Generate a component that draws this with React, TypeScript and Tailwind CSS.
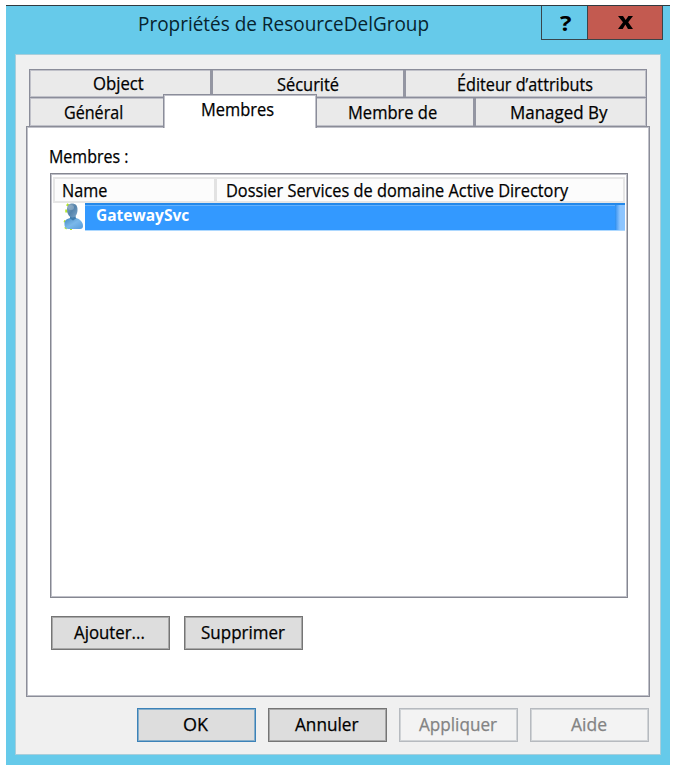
import { useLayoutEffect, useRef, useState } from "react";
import clsx from "clsx";

// A single line of text, condensed or stretched to an exact width.
function Fit({ text, width, className }: { text: string; width: number; className?: string }) {
  const ref = useRef<HTMLSpanElement>(null);
  const [scale, setScale] = useState(1);
  useLayoutEffect(() => {
    if (ref.current) setScale(width / ref.current.offsetWidth);
  }, [width, text]);
  return (
    <div className={clsx("h-5 shrink-0 whitespace-nowrap leading-5", className)} style={{ width }}>
      <span ref={ref} className="inline-block origin-left" style={{ transform: `scaleX(${scale})` }}>
        {text}
      </span>
    </div>
  );
}

function Button({ text, width, kind = "normal" }: { text: string; width: number; kind?: "normal" | "default" | "disabled" }) {
  return (
    <button
      disabled={kind === "disabled"}
      className={clsx(
        "flex h-[34px] w-[119px] shrink-0 justify-center border pr-[2px] pt-[5px]",
        kind === "normal" && "border-[#757575] bg-[#dddddd] shadow-[inset_0_0_0_1px_#a8a8a8]",
        kind === "default" && "border-[#3c82b8] bg-[#dddddd] shadow-[inset_0_0_0_1px_#86aeca]",
        kind === "disabled" && "border-[#b6babf] bg-[#f3f3f3] text-[#838383] shadow-[inset_0_0_0_1px_#d0d3d6]",
      )}
    >
      <Fit text={text} width={width} />
    </button>
  );
}

function UserIcon() {
  return (
    <svg width="22" height="27" viewBox="0 0 22 27" className="block">
      <defs>
        <linearGradient id="head" x1="0" y1="0" x2="1" y2="1">
          <stop offset="0" stopColor="#8eabc0" />
          <stop offset=".5" stopColor="#5583ab" />
          <stop offset="1" stopColor="#7da6ca" />
        </linearGradient>
        <linearGradient id="body" x1="0" y1="0" x2="1" y2="1">
          <stop offset="0" stopColor="#4589c2" />
          <stop offset=".5" stopColor="#7ab8ea" />
          <stop offset="1" stopColor="#569bdb" />
        </linearGradient>
      </defs>
      <path d="M6.500 1 5 3M4.500 6.500v3M3.500 17.500l-.8 2M3 24l2 1.500M8 26h2" fill="none" stroke="#b2e52a" strokeWidth="2.500" />
      <path d="M2.500 22C2 18 4 16 8 15h6c4 1 7 4 7 8 0 2-1 3-3 3H7c-3 0-4-1-4.500-4Z" fill="url(#body)" />
      <path d="M8 13h5.500l.5 2.500-3 2-3-2Z" fill="#3f7cad" />
      <path d="M5 6.500C5 2.500 7 .5 10 .5c3.500 0 5.500 2 5.500 6 0 4.500-2 8-5 8S5 11 5 6.500Z" fill="url(#head)" />
      <ellipse cx="9" cy="4.500" rx="3" ry="2.500" fill="#a3bccf" opacity=".5" />
    </svg>
  );
}

export default function App() {
  return (
    <div className="h-[769px] w-[674px] bg-white pl-[6px] pt-[5px] font-['Open_Sans','Noto_Sans',sans-serif] text-[18px] text-black">
      <div className="flex h-[760px] w-[664px] flex-col bg-[#66caea]">
        <header className="flex h-[49px] justify-between border-t border-[#303a40] pr-[7px]">
          <Fit text="Propriétés de ResourceDelGroup" width={291} className="ml-[132px] mt-[8px] text-[20px] text-[#07242f]" />
          <div className="flex h-[34px] border-x border-b border-[#38454b]">
            <button className="flex w-[46px] justify-center border-r border-[#38454b] pl-px pt-[6px] text-[22px] font-bold">
              <Fit text="?" width={12} />
            </button>
            <button className="flex w-[74px] items-center justify-center bg-[#c35a50]">
              <svg width="15" height="13" viewBox="0 0 15 13">
                <path d="M0 0h5l2.700 4L10.400 0H15l-4.800 6.200L15 13h-5L7.400 8.500 4.700 13H0l5-6.800Z" fill="#000" />
              </svg>
            </button>
          </div>
        </header>

        <main className="ml-[9px] h-[701px] w-[646px] border border-[#a8cedb] bg-[#f0f0f0] pl-[10px] pt-[14px] [-webkit-text-stroke:0.250px]">
          <div className="ml-[3px] flex h-[28px] w-[618px] border border-b-0 border-[#8b8d9a] bg-[#eaeaea] pl-px pt-px shadow-[inset_0_0_0_1px_#c0c1c9]">
            <div className="-mt-px w-[182px] border-r-[3px] border-[#9496a2] pl-[62px] pt-[3px]"><Fit text="Object" width={51} /></div>
            <div className="-mt-px w-[193px] border-r-[3px] border-[#9496a2] pl-[64px] pt-[4px]"><Fit text="Sécurité" width={62} /></div>
            <div className="pl-[51px] pt-[3px]"><Fit text="Éditeur d’attributs" width={136} /></div>
          </div>
          <div className="ml-[3px] flex h-[29px] w-[618px] border border-b-0 border-[#8b8d9a] bg-[#eaeaea] pl-px pt-px shadow-[inset_0_0_0_1px_#c0c1c9]">
            <div className="w-[132px] pl-[33px] pt-[3px]"><Fit text="Général" width={59} /></div>
            <div className="relative z-10 -mt-[5px] h-[34px] w-[154px] border-x border-t border-[#8b8d9a] bg-white pl-[37px] pt-[4px] shadow-[inset_1px_1px_0_#c0c1c9,inset_-1px_0_0_#c0c1c9]"><Fit text="Membres" width={73} /></div>
            <div className="-mt-px w-[159px] border-r-[3px] border-[#9496a2] pl-[31px] pt-[4px]"><Fit text="Membre de" width={89} /></div>
            <div className="pl-[34px] pt-[3px]"><Fit text="Managed By" width={97} /></div>
          </div>

          <section className="h-[571px] w-[624px] border border-[#8b8d98] bg-white pl-[22px] pt-[19px] shadow-[inset_0_0_0_1px_#c0c1c9]">
            <Fit text="Membres :" width={79} />
            <div className="ml-px mt-[7px] h-[425px] w-[578px] border border-[#858791] p-[3px] pl-px shadow-[inset_0_0_0_1px_#c0c1c9]">
              <div className="ml-px flex h-[26px] w-[572px] border-2 border-[#e6e6e6] bg-[#fcfcfc]">
                <div className="w-[162px] border-r-[3px] border-[#e2e2e2] pl-[7px] pt-px"><Fit text="Name" width={45} /></div>
                <div className="pl-[9px] pt-px"><Fit text="Dossier Services de domaine Active Directory" width={342} /></div>
              </div>
              <div className="ml-px flex h-[28px] w-[572px] pl-[9px]">
                <UserIcon />
                <div className="ml-px h-[28px] w-[540px] border-b border-[#add8ff] bg-[#3399ff]">
                  <div className="flex h-[27px] justify-between border-t-2 border-[#2388ea]">
                    <div className="flex-1 border-t border-[#65b1fc] pl-[11px] text-[15.500px] font-bold text-white [-webkit-text-stroke:0]">
                      <Fit text="GatewaySvc" width={93} className="-mt-px" />
                    </div>
                    <div className="w-[10px] bg-linear-to-r from-[#288eef] to-[#8dc5ff] to-50%" />
                  </div>
                </div>
              </div>
            </div>
            <div className="ml-[2px] mt-[18px] flex gap-[14px]">
              <Button text="Ajouter..." width={71} />
              <Button text="Supprimer" width={84} />
            </div>
          </section>

          <footer className="ml-[111px] mt-[11px] flex gap-[12px]">
            <Button text="OK" width={25} kind="default" />
            <Button text="Annuler" width={64} />
            <Button text="Appliquer" width={78} kind="disabled" />
            <Button text="Aide" width={36} kind="disabled" />
          </footer>
        </main>
      </div>
    </div>
  );
}
